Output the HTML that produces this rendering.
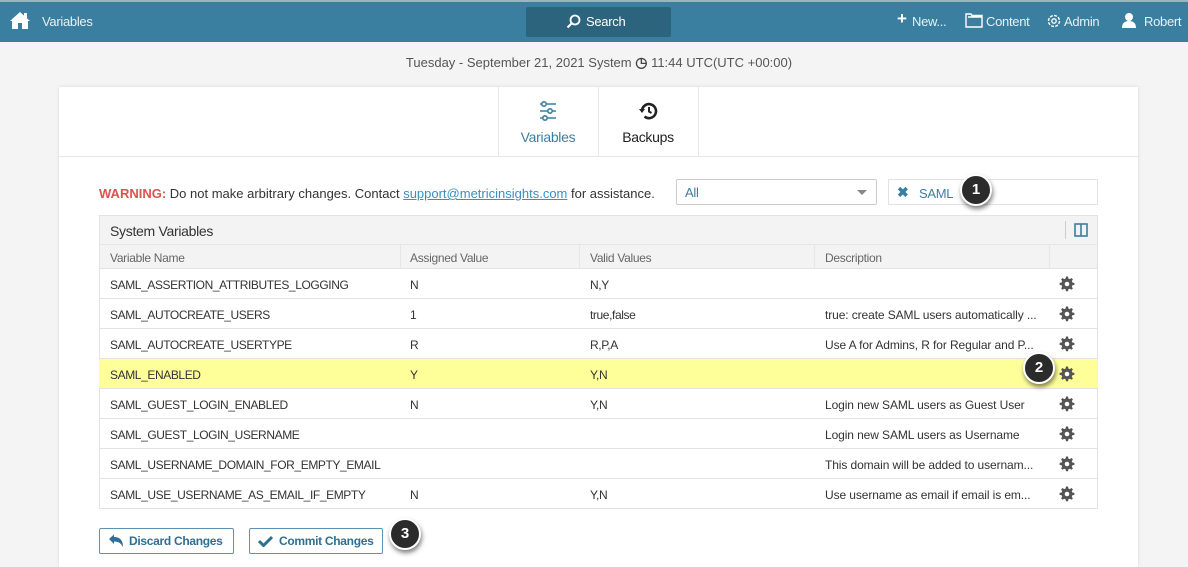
<!DOCTYPE html>
<html><head><meta charset="utf-8"><style>
*{box-sizing:border-box;margin:0;padding:0}
body{width:1188px;height:559px;overflow:hidden;background:#f4f4f4;font-family:"Liberation Sans",Arial,sans-serif;font-size:12px;color:#333;position:relative;letter-spacing:-0.3px}
.a{position:absolute}
.top{left:0;top:0;width:1188px;height:42px;background:#3a7fa0;border-top:2px solid #9fb3bd}
.top .t{color:#e6f0f5;font-size:13px;position:absolute;top:12px}
.card{left:59px;top:87px;width:1079px;height:480px;background:#fff;box-shadow:0 0 3px rgba(0,0,0,.12)}
.row{position:absolute;left:99px;width:999px;height:30px;border-top:1px solid #e3e3e3;font-size:12px;color:#333;letter-spacing:-0.4px}
.row span{position:absolute;top:9px}
.row span.d{letter-spacing:-0.1px}
.row svg{position:absolute;left:960px;top:7px}
.badge{width:32px;height:32px;border-radius:50%;background:#2b2b2b;border:2px solid #fff;box-shadow:1px 3px 5px rgba(0,0,0,.5);color:#fff;font-weight:bold;font-size:15px;text-align:center;line-height:28px;letter-spacing:0}
.btn{height:26px;border:1px solid #5b93b3;border-radius:2px;color:#2f6f92;font-weight:bold;font-size:12px;background:#fff;line-height:24px}
</style></head><body>
<svg width="0" height="0" style="position:absolute"><defs><g id="g"><path d="M7 0.5h2l.4 2 1.4.6 1.7-1.1 1.4 1.4-1.1 1.7.6 1.4 2 .4v2l-2 .4-.6 1.4 1.1 1.7-1.4 1.4-1.7-1.1-1.4.6-.4 2h-2l-.4-2-1.4-.6-1.7 1.1-1.4-1.4 1.1-1.7-.6-1.4-2-.4v-2l2-.4.6-1.4-1.1-1.7 1.4-1.4 1.7 1.1 1.4-.6z" fill="#555"/><circle cx="8" cy="8" r="2.3" fill="#fff"/></g></defs></svg>
<div class="a top">
<svg class="a" style="left:9px;top:9px" width="22" height="19" viewBox="0 0 22 19"><path d="M11 1 L1 10 L3 10 L3 18 L9 18 L9 12 L13 12 L13 18 L19 18 L19 10 L21 10 Z" fill="#fff"/><rect x="15" y="2" width="3" height="5" fill="#fff"/></svg>
<div class="t" style="left:42px">Variables</div>
<div class="a" style="left:526px;top:5px;width:145px;height:30px;background:#2c637d;border-radius:2px"></div>
<svg class="a" style="left:566px;top:12px" width="15" height="15" viewBox="0 0 15 15"><circle cx="9" cy="6" r="4.5" stroke="#fff" stroke-width="1.8" fill="none"/><path d="M6 9 L1.5 13.5" stroke="#fff" stroke-width="2"/></svg>
<div class="t" style="left:586px;color:#fff">Search</div>
<div class="t" style="left:897px;font-size:17px;top:7px;color:#fff;font-weight:bold">+</div>
<div class="t" style="left:912px">New...</div>
<svg class="a" style="left:965px;top:10px" width="18" height="16" viewBox="0 0 18 16"><path d="M1 2 H6 L7 3.5 H17 V15 H1 Z M3 5 H17" stroke="#fff" stroke-width="1.4" fill="none"/></svg>
<div class="t" style="left:986px">Content</div>
<svg class="a" style="left:1046px;top:11px" width="16" height="16" viewBox="0 0 16 16"><circle cx="8" cy="8" r="5.5" stroke="#fff" stroke-width="1.4" fill="none" stroke-dasharray="3 1.3"/><circle cx="8" cy="8" r="2.2" stroke="#fff" stroke-width="1.3" fill="none"/></svg>
<div class="t" style="left:1064px">Admin</div>
<svg class="a" style="left:1121px;top:10px" width="16" height="16" viewBox="0 0 16 16"><circle cx="8" cy="5" r="4" fill="#fff"/><path d="M1 16 Q1 9 8 9 Q15 9 15 16 Z" fill="#fff"/></svg>
<div class="t" style="left:1144px">Robert</div>
</div>
<div class="a" style="left:0;width:1198px;top:54px;text-align:center;font-size:13px;color:#555;letter-spacing:0">Tuesday - September 21, 2021 System <b style="font-size:14px;color:#444">&#x25F7;</b> 11:44 UTC(UTC +00:00)</div>
<div class="a card"></div>
<div class="a" style="left:59px;top:156px;width:1079px;height:1px;background:#e5e5e5"></div>
<div class="a" style="left:498px;top:87px;width:1px;height:69px;background:#e8e8e8"></div>
<div class="a" style="left:598px;top:87px;width:1px;height:69px;background:#e8e8e8"></div>
<div class="a" style="left:698px;top:87px;width:1px;height:69px;background:#e8e8e8"></div>
<svg class="a" style="left:539px;top:101px" width="18" height="20" viewBox="0 0 18 20"><g stroke="#3a7fa0" stroke-width="1.6" fill="#fff"><path d="M1 3H17M1 10H17M1 17H17"/><circle cx="5" cy="3" r="2.2"/><circle cx="11" cy="10" r="2.2"/><circle cx="6" cy="17" r="2.2"/></g></svg>
<div class="a" style="left:498px;width:100px;top:129px;text-align:center;font-size:14px;color:#3a7fa0">Variables</div>
<svg class="a" style="left:638px;top:102px" width="20" height="18" viewBox="0 0 20 18"><path d="M4 9 A7 7 0 1 1 6.5 14.5" stroke="#222" stroke-width="2.6" fill="none"/><path d="M1 7 L4 11 L7 7Z" fill="#222"/><path d="M11 5 V9.5 L13.5 11" stroke="#222" stroke-width="2" fill="none"/></svg>
<div class="a" style="left:598px;width:100px;top:129px;text-align:center;font-size:14px;color:#222">Backups</div>
<div class="a" style="left:99px;top:186px;font-size:13px;color:#333;letter-spacing:0"><b style="color:#d9534f">WARNING:</b> Do not make arbitrary changes. Contact <span style="color:#3a8fc0;text-decoration:underline">support@metricinsights.com</span> for assistance.</div>
<div class="a" style="left:676px;top:179px;width:201px;height:26px;border:1px solid #ccc;border-radius:2px;background:#fff"><span class="a" style="left:8px;top:5px;color:#3a7fa0;font-size:13px">All</span><span class="a" style="right:9px;top:10px;border:5px solid transparent;border-top:5px solid #888;border-bottom:0"></span></div>
<div class="a" style="left:888px;top:179px;width:210px;height:26px;border:1px solid #e3e3e3;background:#fff"><span class="a" style="left:8px;top:4px;color:#3a7fa0;font-size:14px;font-weight:bold">&#x2716;</span><span class="a" style="left:30px;top:6px;color:#3a7fa0;font-size:13px">SAML</span></div>
<div class="a" style="left:99px;top:215px;width:999px;height:294px;border:1px solid #e3e3e3"></div>
<div class="a" style="left:100px;top:216px;width:997px;height:52px;background:#f3f3f3"></div>
<div class="a" style="left:110px;top:223px;font-size:14px;color:#333">System Variables</div>
<div class="a" style="left:1065px;top:221px;width:1px;height:18px;background:#ccc"></div>
<svg class="a" style="left:1074px;top:223px" width="14" height="14"><rect x="1" y="1" width="12" height="12" fill="none" stroke="#3a7fa0" stroke-width="1.6"/><path d="M7 1V13" stroke="#3a7fa0" stroke-width="1.6"/></svg>
<div class="a" style="left:100px;top:244px;width:997px;height:1px;background:#e6e6e6"></div>
<div class="a" style="left:110px;top:251px;color:#666">Variable Name</div>
<div class="a" style="left:410px;top:251px;color:#666">Assigned Value</div>
<div class="a" style="left:590px;top:251px;color:#666">Valid Values</div>
<div class="a" style="left:825px;top:251px;color:#666">Description</div>
<div class="a" style="left:400px;top:245px;width:1px;height:23px;background:#e6e6e6"></div>
<div class="a" style="left:579px;top:245px;width:1px;height:23px;background:#e6e6e6"></div>
<div class="a" style="left:814px;top:245px;width:1px;height:23px;background:#e6e6e6"></div>
<div class="a" style="left:1049px;top:245px;width:1px;height:23px;background:#e6e6e6"></div>

<div class="row" style="top:268px"><span style="left:11px">SAML_ASSERTION_ATTRIBUTES_LOGGING</span><span style="left:311px">N</span><span style="left:491px">N,Y</span><svg width="16" height="16"><use href="#g"/></svg></div>
<div class="row" style="top:298px"><span style="left:11px">SAML_AUTOCREATE_USERS</span><span style="left:311px">1</span><span style="left:491px">true,false</span><span class="d" style="left:726px">true: create SAML users automatically ...</span><svg width="16" height="16"><use href="#g"/></svg></div>
<div class="row" style="top:328px"><span style="left:11px">SAML_AUTOCREATE_USERTYPE</span><span style="left:311px">R</span><span style="left:491px">R,P,A</span><span class="d" style="left:726px">Use A for Admins, R for Regular and P...</span><svg width="16" height="16"><use href="#g"/></svg></div>
<div class="row" style="top:358px;background:#ffff99"><span style="left:11px">SAML_ENABLED</span><span style="left:311px">Y</span><span style="left:491px">Y,N</span><svg width="16" height="16"><use href="#g"/></svg></div>
<div class="row" style="top:388px"><span style="left:11px">SAML_GUEST_LOGIN_ENABLED</span><span style="left:311px">N</span><span style="left:491px">Y,N</span><span class="d" style="left:726px">Login new SAML users as Guest User</span><svg width="16" height="16"><use href="#g"/></svg></div>
<div class="row" style="top:418px"><span style="left:11px">SAML_GUEST_LOGIN_USERNAME</span><span class="d" style="left:726px">Login new SAML users as Username</span><svg width="16" height="16"><use href="#g"/></svg></div>
<div class="row" style="top:448px"><span style="left:11px">SAML_USERNAME_DOMAIN_FOR_EMPTY_EMAIL</span><span class="d" style="left:726px">This domain will be added to usernam...</span><svg width="16" height="16"><use href="#g"/></svg></div>
<div class="row" style="top:478px"><span style="left:11px">SAML_USE_USERNAME_AS_EMAIL_IF_EMPTY</span><span style="left:311px">N</span><span style="left:491px">Y,N</span><span class="d" style="left:726px">Use username as email if email is em...</span><svg width="16" height="16"><use href="#g"/></svg></div>

<div class="a btn" style="left:99px;top:528px;width:135px"><svg style="position:absolute;left:8px;top:5px" width="16" height="14" viewBox="0 0 16 14"><path d="M1 5 L6 0.5 V3 Q15 3 15 13 Q12 7 6 7.5 V10 Z" fill="#2f6f92"/></svg><span style="position:absolute;left:29px">Discard Changes</span></div>
<div class="a btn" style="left:249px;top:528px;width:134px"><svg style="position:absolute;left:8px;top:6px" width="15" height="12" viewBox="0 0 15 12"><path d="M1 6 L5.5 10.5 L14 2" stroke="#2f6f92" stroke-width="3" fill="none"/></svg><span style="position:absolute;left:29px">Commit Changes</span></div>

<div class="a badge" style="left:960px;top:174px">1</div>
<div class="a badge" style="left:1023px;top:352px">2</div>
<div class="a badge" style="left:389px;top:518px">3</div>
</body></html>
